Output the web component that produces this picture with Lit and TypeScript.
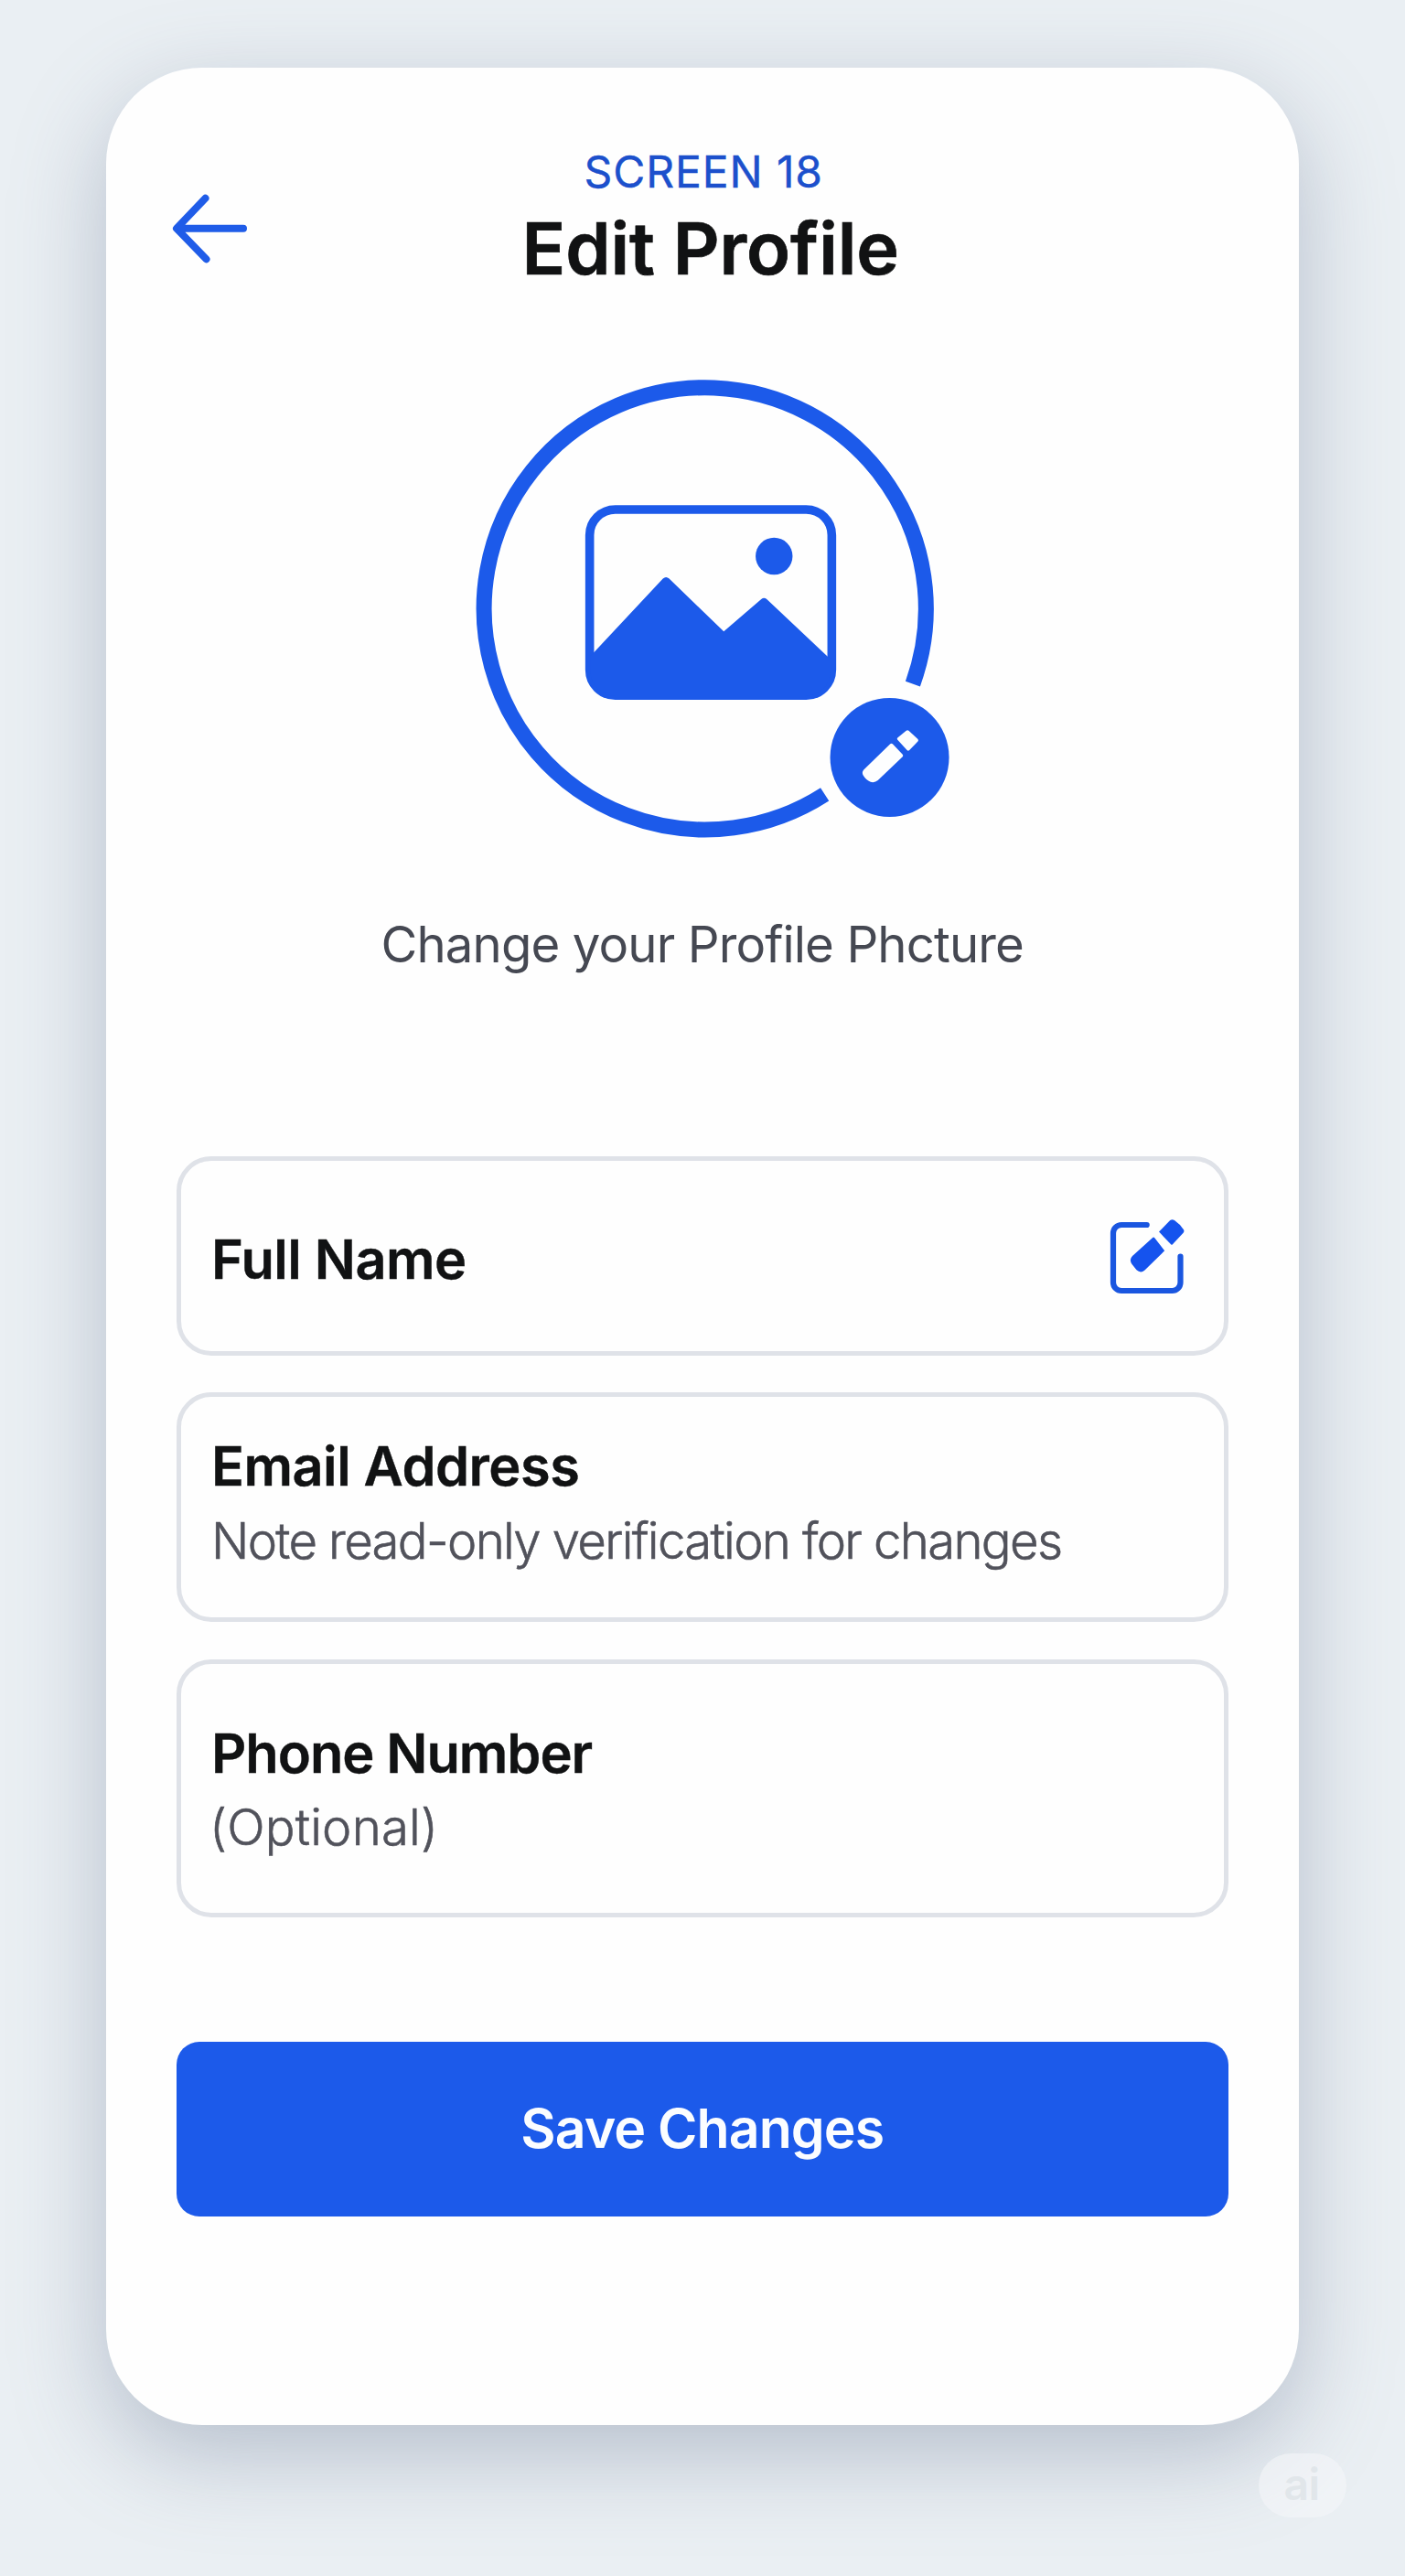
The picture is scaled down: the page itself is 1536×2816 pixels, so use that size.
import { LitElement, html, css, nothing } from "lit";
import { customElement, property } from "lit/decorators.js";

@customElement("profile-field")
export class ProfileField extends LitElement {
  @property() label = "";
  @property() note = "";
  @property({ type: Boolean }) editable = false;

  static styles = css`
    :host {
      display: flex;
      justify-content: space-between;
      align-items: flex-start;
      box-sizing: border-box;
      padding-left: 33px;
      padding-right: 39px;
      border: 5px solid #dfe2e8;
      border-radius: 38px;
      background: #fefefe;
    }
    .texts {
      display: flex;
      flex-direction: column;
      gap: 12.5px;
      white-space: nowrap;
    }
    .label {
      font-size: 59.5px;
      line-height: 72px;
      font-weight: 600;
      letter-spacing: var(--label-spacing, -0.55px);
      -webkit-text-stroke: 0.4px #111213;
      color: #111213;
    }
    .note {
      font-size: 54.5px;
      line-height: 66px;
      font-weight: 300;
      letter-spacing: var(--note-spacing, 0);
      -webkit-text-stroke: 0.6px #51525b;
      margin-left: var(--note-indent, 0);
      color: #51525b;
    }
    .edit {
      width: 88px;
      height: 88px;
      margin-top: -10px;
      flex: none;
    }
  `;

  render() {
    return html`
      <div class="texts">
        <span class="label">${this.label}</span>
        ${this.note ? html`<span class="note">${this.note}</span>` : nothing}
      </div>
      ${this.editable
        ? html`<svg class="edit" viewBox="0 0 88 88" fill="none">
            <path
              d="M42.7 9H15a9 9 0 0 0-9 9V72a9 9 0 0 0 9 9H70.5a9 9 0 0 0 9-9V43.5"
              stroke="#1a56e0"
              stroke-width="6.2"
              stroke-linecap="round"
            />
            <path
              d="M49.4 22.7L27 43Q23 47 26.5 52L31.5 58.3Q36 62.5 40.5 58.5L62.2 37.2L51.5 23.6Q50.5 22 49.4 22.7Z"
              fill="#1553ee"
            />
            <path
              d="M68.2 4Q70.5 2.4 73 4Q79.5 8.5 83 14.3Q84 16 82.6 17.7L70.7 30.5Q70 31.2 69.3 30.5L56 16.5Z"
              fill="#1553ee"
            />
          </svg>`
        : nothing}
    `;
  }
}

@customElement("app-root")
export class AppRoot extends LitElement {
  static styles = css`
    :host {
      display: flex;
      flex-direction: column;
      position: relative;
      box-sizing: border-box;
      width: 1536px;
      height: 2816px;
      padding: 73.5px 116px 0 115.5px;
      overflow: hidden;
      background: #eaeff3;
      font-family: Inter, "Liberation Sans", sans-serif;
    }
    .card {
      display: flex;
      flex-direction: column;
      box-sizing: border-box;
      height: 2577.5px;
      padding: 85px 77.5px 0;
      border-radius: 105px;
      background: #fefefe;
      box-shadow: 0 32px 100px rgba(96, 112, 142, 0.38);
    }
    .header {
      display: grid;
      grid-template-columns: 90px 1fr 90px;
      margin: 0 -8px;
    }
    .back {
      width: 90px;
      height: 80px;
      margin-top: 51.5px;
    }
    .titles {
      display: flex;
      flex-direction: column;
      align-items: center;
      gap: 6px;
    }
    .eyebrow {
      font-size: 48px;
      line-height: 58px;
      letter-spacing: 0.88px;
      padding-left: 3px;
      -webkit-text-stroke: 0.4px #1c50cc;
      color: #1c50cc;
    }
    .title {
      margin: 0;
      padding-left: 18px;
      font-size: 79px;
      line-height: 96px;
      font-weight: 600;
      letter-spacing: -0.1px;
      -webkit-text-stroke: 0.7px #111213;
      color: #111213;
    }
    .avatar {
      align-self: center;
      width: 540px;
      height: 510px;
      margin-top: 91.5px;
    }
    .caption {
      align-self: center;
      margin: 78.5px 0 199.5px;
      font-size: 54.5px;
      line-height: 66px;
      letter-spacing: -0.88px;
      white-space: nowrap;
      color: #454852;
    }
    .fields {
      display: flex;
      flex-direction: column;
      gap: 40.75px;
    }
    .name {
      height: 217.5px;
      padding-top: 71px;
    }
    .email {
      height: 250.5px;
      padding-top: 39px;
      --note-spacing: -1.66px;
    }
    .phone {
      height: 282px;
      padding-top: 61px;
      --label-spacing: -1.05px;
      --note-spacing: 0.2px;
      --note-indent: -2px;
    }
    .save {
      height: 191px;
      margin-top: 136.5px;
      padding: 0 0 3px;
      border: 0;
      border-radius: 25px;
      background: #1c5aea;
      color: #fbfdff;
      font-family: inherit;
      font-size: 59px;
      font-weight: 600;
      letter-spacing: -0.95px;
    }
    .mark {
      position: absolute;
      left: 1376px;
      top: 2682px;
      display: flex;
      align-items: center;
      justify-content: center;
      box-sizing: border-box;
      width: 96px;
      height: 70px;
      padding: 0 2px 3px 0;
      border-radius: 35px;
      background: rgba(244, 246, 249, 0.62);
      color: #e1e6ea;
      font-size: 48px;
      font-weight: 600;
      letter-spacing: -0.5px;
    }
  `;

  render() {
    return html`
      <main class="card">
        <header class="header">
          <svg class="back" viewBox="0 0 90 80" fill="none">
            <path
              d="M39.5 6.7L8 39.7L40.5 73.3M10 39.7H81"
              stroke="#1f5ce8"
              stroke-width="8"
              stroke-linecap="round"
              stroke-linejoin="round"
            />
            <path d="M8 39.7L15 32.5L18.5 39.7L15 47Z" fill="#1f5ce8" />
          </svg>
          <div class="titles">
            <span class="eyebrow">SCREEN 18</span>
            <h1 class="title">Edit Profile</h1>
          </div>
        </header>

        <svg class="avatar" viewBox="497.75 410 540 510" fill="none">
          <path
            d="M997.65 747.6A241.6 241.6 0 1 0 901.4 868.4"
            stroke="#1c5aea"
            stroke-width="17"
          />
          <rect x="644.4" y="557" width="264.7" height="203.2" rx="28" stroke="#1c5aea" stroke-width="9.6" />
          <path
            d="M645 717.5L724.5 632.5Q727.9 629.3 731.3 632.5L791 690.3L832 655Q835 652.6 838 655L908 721V733A28 28 0 0 1 880 761H673A28 28 0 0 1 645 733Z"
            fill="#1c5aea"
          />
          <circle cx="846" cy="608" r="20.2" fill="#1c5aea" />
          <circle cx="972.3" cy="827.9" r="65" fill="#1c5aea" />
          <path
            d="M973 813.3L944 841.5Q941.6 844.2 943.4 847.5Q946.5 852.8 951.5 854.8Q956 856 959.5 853L986.5 827.2Q987.6 826 986.5 824.7L975.6 813.3Q974.3 812 973 813.3Z"
            fill="#fdfeff"
          />
          <path
            d="M990.5 798.7Q991.8 797.6 993.2 798.7L1003.2 808Q1004.2 809.1 1003.2 810.5L993.7 820.3Q992.5 821.3 991.3 820L980.8 808.5Q980.1 807.5 981 806.5Z"
            fill="#fdfeff"
          />
        </svg>

        <p class="caption">Change your Profile Phcture</p>

        <section class="fields">
          <profile-field class="name" label="Full Name" editable></profile-field>
          <profile-field
            class="email"
            label="Email Address"
            note="Note read-only verification for changes"
          ></profile-field>
          <profile-field class="phone" label="Phone Number" note="(Optional)"></profile-field>
        </section>

        <button class="save">Save Changes</button>
      </main>
      <span class="mark">ai</span>
    `;
  }
}
